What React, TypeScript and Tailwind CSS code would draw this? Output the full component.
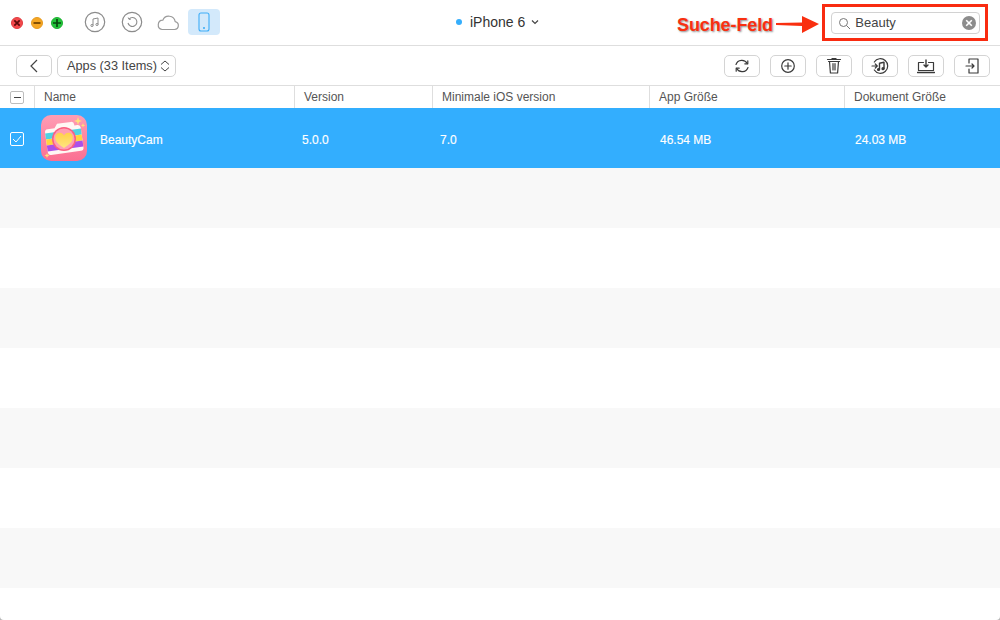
import React from "react";

const S = "#3a3a3a";

function Btn({ children }: { children: React.ReactNode }) {
  return (
    <div className="flex h-[22px] w-9 items-center justify-center rounded-[5px] border border-[#d4d4d4] bg-white">
      {children}
    </div>
  );
}

function Icon({ size = 18, children }: { size?: number; children: React.ReactNode }) {
  return (
    <svg width={size} height={size} viewBox="0 0 18 18" fill="none" stroke={S} strokeWidth="1.200" strokeLinecap="round" strokeLinejoin="round">
      {children}
    </svg>
  );
}

function Light({ bg, border, children }: { bg: string; border: string; children: React.ReactNode }) {
  return (
    <div className={`flex h-3 w-3 items-center justify-center rounded-full border ${bg} ${border}`}>
      {children}
    </div>
  );
}

function AppIcon() {
  return (
    <svg width="46" height="46" viewBox="0 0 46 46">
      <defs>
        <linearGradient id="g" x1="0" y1="0" x2="0" y2="1">
          <stop offset="0" stopColor="#ff9db4" />
          <stop offset="1" stopColor="#fb6f92" />
        </linearGradient>
        <linearGradient id="h" x1="0" y1="0" x2="0" y2="1">
          <stop offset="0" stopColor="#ffd24a" />
          <stop offset="1" stopColor="#ffe680" />
        </linearGradient>
      </defs>
      <rect width="46" height="46" rx="10" fill="url(#g)" />
      <g transform="rotate(-8 23 23)">
        <path d="M8 12h7l3-4h14a3 3 0 0 1 3 3v1h3a3 3 0 0 1 3 3v20a3 3 0 0 1-3 3H8a3 3 0 0 1-3-3V15a3 3 0 0 1 3-3z" fill="#fff7f4" />
        <rect x="5" y="16" width="36" height="6" fill="#4fd3e2" />
        <rect x="5" y="22" width="36" height="6" fill="#ffd43f" />
        <rect x="5" y="28" width="36" height="6" fill="#ac4fe8" />
      </g>
      <circle cx="23" cy="24" r="12" fill="#fb5f82" />
      <circle cx="23" cy="24" r="10.500" fill="#ff9fb3" />
      <path d="M23 33c-6-3.800-8.800-6.700-8.800-10.400 0-2.800 2.100-4.800 4.600-4.800 1.800 0 3.300 1 4.200 2.600.9-1.600 2.400-2.600 4.200-2.600 2.500 0 4.600 2 4.600 4.800 0 3.700-2.800 6.600-8.800 10.400z" fill="url(#h)" />
      <path d="M37 2l1 3 3 1-3 1-1 3-1-3-3-1 3-1z" fill="#ffe27a" />
      <path d="M42 8l.6 1.800 1.800.6-1.800.6-.6 1.800-.6-1.800-1.800-.6 1.800-.6z" fill="#ffe27a" />
      <path d="M6 38l.7 1.800 1.800.7-1.800.7L6 43l-.7-1.800-1.800-.7 1.800-.7z" fill="#ffe27a" />
    </svg>
  );
}

const cols = [
  { label: "Version", w: "w-[138px]" },
  { label: "Minimale iOS version", w: "w-[217px]" },
  { label: "App Größe", w: "w-[195px]" },
  { label: "Dokument Größe", w: "flex-1" },
];

const vals = [
  { t: "5.0.0", w: "w-[138px]" },
  { t: "7.0", w: "w-[220px]" },
  { t: "46.54 MB", w: "w-[195px]" },
  { t: "24.03 MB", w: "flex-1" },
];

export default function App() {
  return (
    <div className="h-[620px] w-[1000px] bg-[#b5b5b5]">
      <div
        className="relative h-[620px] w-[1000px] overflow-hidden rounded-b-[4px] bg-white text-[#444]"
        style={{ fontFamily: '"Liberation Sans", Arial, sans-serif' }}
      >
        {/* Title bar */}
        <div className="flex h-[46px] items-center border-b border-[#dedede] pb-px pl-[11px]">
          <div className="mt-[2px] flex gap-2">
            <Light bg="bg-[#f4494c]" border="border-[#e03c40]">
              <svg width="8" height="8" viewBox="0 0 8 8" stroke="#5c0a0a" strokeWidth="1.700"><path d="M1.300 1.300l5.400 5.400M6.700 1.300 1.300 6.700" /></svg>
            </Light>
            <Light bg="bg-[#f5a623]" border="border-[#e69a20]">
              <svg width="8" height="8" viewBox="0 0 8 8" stroke="#6e4200" strokeWidth="1.700"><path d="M0.500 4h7" /></svg>
            </Light>
            <Light bg="bg-[#22c33a]" border="border-[#1fb233]">
              <svg width="10" height="10" viewBox="0 0 10 10" stroke="#07470f" strokeWidth="1.700"><path d="M5 1v8M1 5h8" /></svg>
            </Light>
          </div>
          <div className="ml-[21px] flex items-center">
            <svg width="22" height="22" viewBox="0 0 22 22" fill="none" stroke="#8c8c8c">
              <circle cx="11" cy="11" r="9.700" strokeWidth="1.200" />
              <path d="M9 14.500V8l5-1v6.500" strokeWidth="1" />
              <circle cx="8" cy="14.500" r="1.100" strokeWidth="1" />
              <circle cx="13" cy="13.500" r="1.100" strokeWidth="1" />
            </svg>
            <svg className="ml-[15px]" width="22" height="22" viewBox="0 0 22 22" fill="none" stroke="#8c8c8c">
              <circle cx="11" cy="11" r="9.700" strokeWidth="1.200" />
              <path d="M8 8a4.500 4.500 0 1 1-1 4" strokeWidth="1.100" />
              <path d="M7.200 6.500 8 8.400l2-.4" strokeWidth="1" />
            </svg>
            <svg className="ml-[13px] mt-[2px]" width="24" height="18" viewBox="0 0 24 18" fill="none" stroke="#9a9a9a" strokeWidth="1.200">
              <path d="M6 15.500h12.500a4 4 0 0 0 .7-7.900 6.500 6.500 0 0 0-12.400-1.400A4.700 4.700 0 0 0 6 15.500z" />
            </svg>
            <div className="ml-[8px] flex h-[26px] w-8 items-center justify-center rounded bg-[#d3e9fb]">
              <svg width="12" height="20" viewBox="0 0 12 20" fill="none" stroke="#3eaef8" strokeWidth="1.100">
                <rect x="1" y="1" width="10" height="18" rx="2" />
                <circle cx="6" cy="16" r="0.500" />
              </svg>
            </div>
          </div>
          <div className="ml-[236px] flex items-center">
            <div className="h-[6px] w-[6px] rounded-full bg-[#35aefc]" />
            <span className="ml-[8px] text-[14px] text-[#333]">iPhone 6</span>
            <svg className="ml-[6px]" width="8" height="6" viewBox="0 0 8 6" fill="none" stroke="#444" strokeWidth="1.200"><path d="M1 1.500 4 4.500 7 1.500" /></svg>
          </div>
          <div className="ml-[292px] mt-[2px] flex h-[22px] w-[149px] items-center rounded-[4px] border border-[#d2d2d2] bg-white pl-[6px] pr-[3px]">
            <svg width="13" height="13" viewBox="0 0 13 13" fill="none" stroke="#777" strokeWidth="1"><circle cx="5.500" cy="5.500" r="4" /><path d="M8.500 8.500l3.500 3.500" /></svg>
            <span className="ml-[4px] flex-1 text-[13px] text-[#444]">Beauty</span>
            <div className="flex h-[14px] w-[14px] items-center justify-center rounded-full bg-[#8c8c8c]">
              <svg width="8" height="8" viewBox="0 0 8 8" stroke="#fff" strokeWidth="1.600"><path d="M1.200 1.200l5.600 5.600M6.800 1.200 1.200 6.800" /></svg>
            </div>
          </div>
        </div>

        {/* Annotation */}
        <div className="absolute left-[822px] top-[4px] h-[37px] w-[166px] border-[3px] border-[#f92b10]" />
        <span
          className="absolute left-[677px] top-[14px] text-[18px] font-bold leading-[22px] tracking-[-0.1px] text-[#f92f10]"
          style={{ textShadow: "1px 1px 2px rgba(0,0,0,.45)" }}
        >
          Suche-Feld
        </span>
        <svg className="absolute left-[775px] top-[14px]" width="46" height="22" viewBox="0 0 46 22">
          <path d="M1 9 27 8.500 27 2 44 10 27 19 27 12 1 11z" fill="#f92f10" />
        </svg>

        {/* Toolbar */}
        <div className="flex h-[40px] items-center justify-between border-b border-[#dedede] pl-4 pr-[10px] pt-px">
          <div className="flex gap-[5px]">
            <Btn>
              <svg width="10" height="14" viewBox="0 0 10 14" fill="none" stroke="#444" strokeWidth="1.200"><path d="M8 1 2 7l6 6" /></svg>
            </Btn>
            <div className="flex h-[22px] w-[119px] items-center gap-[3px] rounded-[5px] border border-[#d4d4d4] pl-[9px]">
              <span className="text-[12.75px] text-[#444]">Apps (33 Items)</span>
              <svg width="10" height="14" viewBox="0 0 10 14" fill="none" stroke="#444" strokeWidth="1"><path d="M1 5.500 5 2 9 5.500M1 8.500 5 12 9 8.500" /></svg>
            </div>
          </div>
          <div className="flex gap-[10px]">
            <Btn>
              <Icon>
                <path d="M3 7.500A6.200 6.200 0 0 1 14.300 6.500" />
                <path d="M14.800 3.800v3h-3" />
                <path d="M15 10.500A6.200 6.200 0 0 1 3.700 11.500" />
                <path d="M3.200 14.200v-3h3" />
              </Icon>
            </Btn>
            <Btn>
              <Icon>
                <circle cx="9" cy="9" r="6.300" />
                <path d="M9 5.800v6.400M5.800 9h6.400" />
              </Icon>
            </Btn>
            <Btn>
              <Icon>
                <path d="M2.500 2.500h13M7 2.500v-1h4v1" />
                <path d="M3.500 4.500h11M4.500 4.500l.9 11.500h7.200l.9-11.500" />
                <path d="M8 6.500v6.500M10 6.500v6.500" />
              </Icon>
            </Btn>
            <Btn>
              <Icon>
                <path d="M3.300 5A7.300 7.300 0 1 1 3.300 13" />
                <path d="M1 9h5M4.300 7l2 2-2 2" />
                <path d="M8.500 12.500V6.300l4.500-1v6.200" strokeWidth="1.400" />
                <circle cx="7.500" cy="12.500" r="1" fill={S} />
                <circle cx="12" cy="11.700" r="1" fill={S} />
              </Icon>
            </Btn>
            <Btn>
              <Icon>
                <path d="M6.500 5.500H1.500v8h15v-8h-5" />
                <path d="M9 3v7M7 8 9 10l2-2" strokeWidth="1.400" />
                <path d="M.5 15.500h17" strokeWidth="1.500" />
              </Icon>
            </Btn>
            <Btn>
              <Icon>
                <path d="M6 6V2h9v14H6v-4" />
                <path d="M3 9h8M9 7l2 2-2 2" />
              </Icon>
            </Btn>
          </div>
        </div>

        {/* Table header */}
        <div className="flex h-[22px] items-center text-[12px] text-[#555]">
          <div className="flex h-full w-[35px] items-center border-r border-[#dedede] pl-[10px]">
            <div className="flex h-[13px] w-[14px] items-center justify-center rounded-[2px] border border-[#bdbdbd]">
              <div className="h-px w-[7px] bg-[#444]" />
            </div>
          </div>
          <div className="flex h-full w-[260px] items-center border-r border-[#dedede] pl-[9px]">Name</div>
          {cols.map((c, i) => (
            <div key={c.label} className={`flex h-full items-center pl-[9px] ${c.w} ${i < 3 ? "border-r border-[#dedede]" : ""}`}>
              {c.label}
            </div>
          ))}
        </div>

        {/* Selected row */}
        <div className="flex h-[60px] items-center bg-[#33aefe] text-[12px] text-white [-webkit-text-stroke:0.15px_white]">
          <div className="mt-[2px] flex w-[35px] pl-[10px]">
            <div className="flex h-[14px] w-[14px] items-center justify-center rounded-[2px] border border-white">
              <svg width="10" height="8" viewBox="0 0 10 8" fill="none" stroke="#fff" strokeWidth="1"><path d="M1 4l3 3 5-6" /></svg>
            </div>
          </div>
          <div className="ml-[6px] flex w-[261px] items-center">
            <AppIcon />
            <span className="ml-[13px] mt-[4px]">BeautyCam</span>
          </div>
          {vals.map((v) => (
            <div key={v.t} className={`mt-[3px] ${v.w}`}>{v.t}</div>
          ))}
        </div>

        {/* Empty rows */}
        {[0, 1, 2, 3, 4, 5, 6].map((i) => (
          <div key={i} className={`h-[60px] ${i % 2 === 0 ? "bg-[#f8f8f8]" : "bg-white"}`} />
        ))}
      </div>
    </div>
  );
}
